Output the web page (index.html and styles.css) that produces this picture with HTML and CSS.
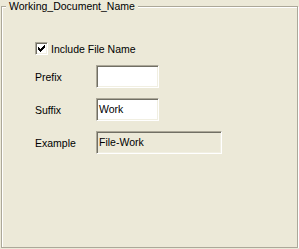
FILE: index.html
```html
<!DOCTYPE html>
<html lang="en">
<head>
  <meta charset="UTF-8">
  <title>Working Document Name</title>
  <link rel="stylesheet" href="styles.css">
</head>
<body>
  <fieldset class="group">
    <legend>Working_Document_Name</legend>
    <div class="group-body">
      <label class="check-row">
        <span class="checkbox">
          <svg width="7" height="7" viewBox="0 0 7 7"><path d="M0 2h1v1h1v1h1v-1h1v-1h1v-1h1v-1h1v3h-1v1h-1v1h-1v1h-1v1h-1v-1h-1v-1h-1z" fill="#000"/></svg>
        </span>
        Include File Name
      </label>
      <div class="fields">
        <span class="field-label">Prefix</span>
        <div class="text-box short"></div>
        <span class="field-label">Suffix</span>
        <div class="text-box short">Work</div>
        <span class="field-label">Example</span>
        <div class="text-box long readonly">File-Work</div>
      </div>
    </div>
  </fieldset>
</body>
</html>
```

FILE: styles.css
```css
body {
  margin: 0;
  padding: 0 1px;
  background: #ece9d8;
  font-family: "Liberation Sans", Arial, sans-serif;
  font-size: 10.5px;
  color: #000;
}
.group {
  box-sizing: border-box;
  width: 297px;
  height: 248px;
  margin: 0;
  padding: 0;
  border: 1px solid #aca899;
  box-shadow: 1px 1px 0 #fff, inset 1px 1px 0 #fff;
}
.group legend {
  margin-left: 4px;
  padding: 0 3px;
  line-height: 13px;
  background: #ece9d8;
}
.group-body {
  padding: 29px 0 0 33px;
}
.check-row {
  display: flex;
  align-items: center;
  gap: 3px;
  height: 13px;
}
.checkbox {
  box-sizing: border-box;
  width: 13px;
  height: 13px;
  display: flex;
  align-items: center;
  justify-content: center;
  background: #fff;
  border: 1px solid;
  border-color: #aca899 #fff #fff #aca899;
  box-shadow: inset 1px 1px 0 #716f64, inset -1px -1px 0 #f1efe2;
}
.fields {
  display: grid;
  grid-template-columns: 61px auto;
  row-gap: 10px;
  align-items: center;
  justify-items: start;
  margin-top: 10px;
}
.text-box {
  box-sizing: border-box;
  height: 23px;
  padding: 0 2px;
  line-height: 21px;
  background: #fff;
  border: 1px solid;
  border-color: #aca899 #fff #fff #aca899;
  box-shadow: inset 1px 1px 0 #716f64, inset -1px -1px 0 #f1efe2;
}
.short {
  width: 63px;
}
.long {
  width: 126px;
}
.readonly {
  background: #ece9d8;
}
```
